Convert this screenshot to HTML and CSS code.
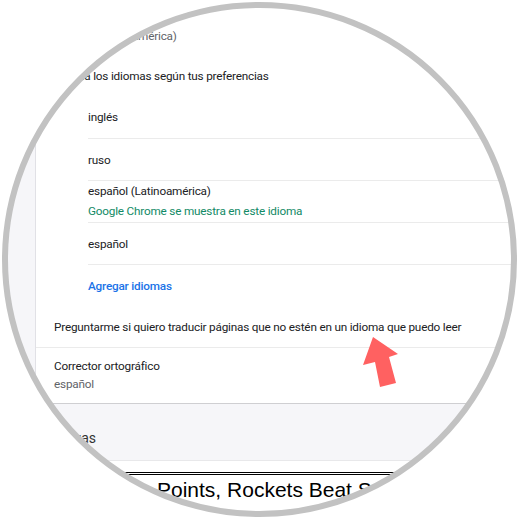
FILE: index.html
```html
<!DOCTYPE html>
<html lang="es">
<head>
<meta charset="utf-8">
<link rel="stylesheet" href="styles.css">
</head>
<body>
<div class="viewport">
  <div class="lens">
    <div class="top">
      <div class="gutter"></div>
      <div class="card">
        <div class="current">español (Latinoamérica)</div>
        <div class="order">Ordena los idiomas según tus preferencias</div>
        <ul class="langs">
          <li class="lang">inglés</li>
          <li class="lang">ruso</li>
          <li class="lang two">
            <span>español (Latinoamérica)</span>
            <span class="note">Google Chrome se muestra en este idioma</span>
          </li>
          <li class="lang">español</li>
          <li class="lang add">Agregar idiomas</li>
        </ul>
        <div class="row ask">Preguntarme si quiero traducir páginas que no estén en un idioma que puedo leer</div>
        <div class="row spell">
          <span>Corrector ortográfico</span>
          <span class="sub">español</span>
        </div>
      </div>
    </div>
    <div class="band"><span class="band-title">Descargas</span></div>
    <div class="news">
      <div class="headline">Points, Rockets Beat Spurs</div>
    </div>
  </div>
  <div class="ring"></div>
  <svg class="arrow" width="520" height="520" viewBox="0 0 520 520">
    <polygon points="373,337 398,354 389,357 396,383 380,387 375,362 363,365" fill="#ff6161"/>
  </svg>
</div>
</body>
</html>
```
FILE: styles.css
```css
* { box-sizing: border-box; }
html, body { margin: 0; padding: 0; background: #fff; }
body { font-family: Roboto, "Noto Sans", Arial, sans-serif; font-size: 11.75px; letter-spacing: -0.2px; color: #202124; }

.viewport { position: relative; width: 520px; height: 520px; overflow: hidden; background: #fff; }

.lens {
  width: 520px; height: 520px;
  background: #f6f6f9;
  clip-path: circle(256px at 259.5px 259.5px);
  display: flex; flex-direction: column;
}

.top { display: flex; height: 404px; }
.gutter { width: 36px; border-right: 1px solid #e1e1e6; background: #f6f6f9; }
.card { flex: 1; background: #fff; border-bottom: 1px solid #cfcfd2; display: flex; flex-direction: column; }

.current { padding: 26px 0 0 18px; line-height: 20px; color: #5f6368; }
.order { padding: 20px 0 0 18px; line-height: 20px; color: #202124; height: 50px; }

.langs { list-style: none; margin: 0 0 0 52px; padding: 0; }
.lang { height: 42px; display: flex; flex-direction: column; justify-content: center; line-height: 20px; border-top: 1px solid #ebebeb; }
.lang:first-child { border-top: none; }
.lang.two { justify-content: flex-start; }
.lang .note { color: #128a66; line-height: 21px; }
.lang.add { color: #1a73e8; font-weight: 500; }

.row { padding-left: 18px; }
.ask { height: 42px; display: flex; align-items: center; border-bottom: 1px solid #ebebeb; }
.spell { flex: 1; display: flex; flex-direction: column; padding-top: 8px; line-height: 20px; }
.spell .sub { color: #5f6368; line-height: 16px; }

.band { height: 57px; padding: 24px 0 0 30px; border-bottom: 1px solid #e8e8ea; line-height: 20px; font-size: 14px; letter-spacing: 0; color: #333; }

.news { flex: 1; background: #fff; padding: 11px 0 0 123px; }
.headline {
  width: 274px;
  border-top: 3px double #000;
  font-family: "Liberation Sans", Arial, sans-serif;
  font-size: 21px; line-height: 30px; color: #000; letter-spacing: 0;
  white-space: nowrap;
  padding-left: 34px;
}

.ring {
  position: absolute; left: 2px; top: 2px; width: 515px; height: 515px;
  border: 6px solid #c2c2c2; border-radius: 50%;
  pointer-events: none;
}
.arrow { position: absolute; left: 0; top: 0; pointer-events: none; }
```
